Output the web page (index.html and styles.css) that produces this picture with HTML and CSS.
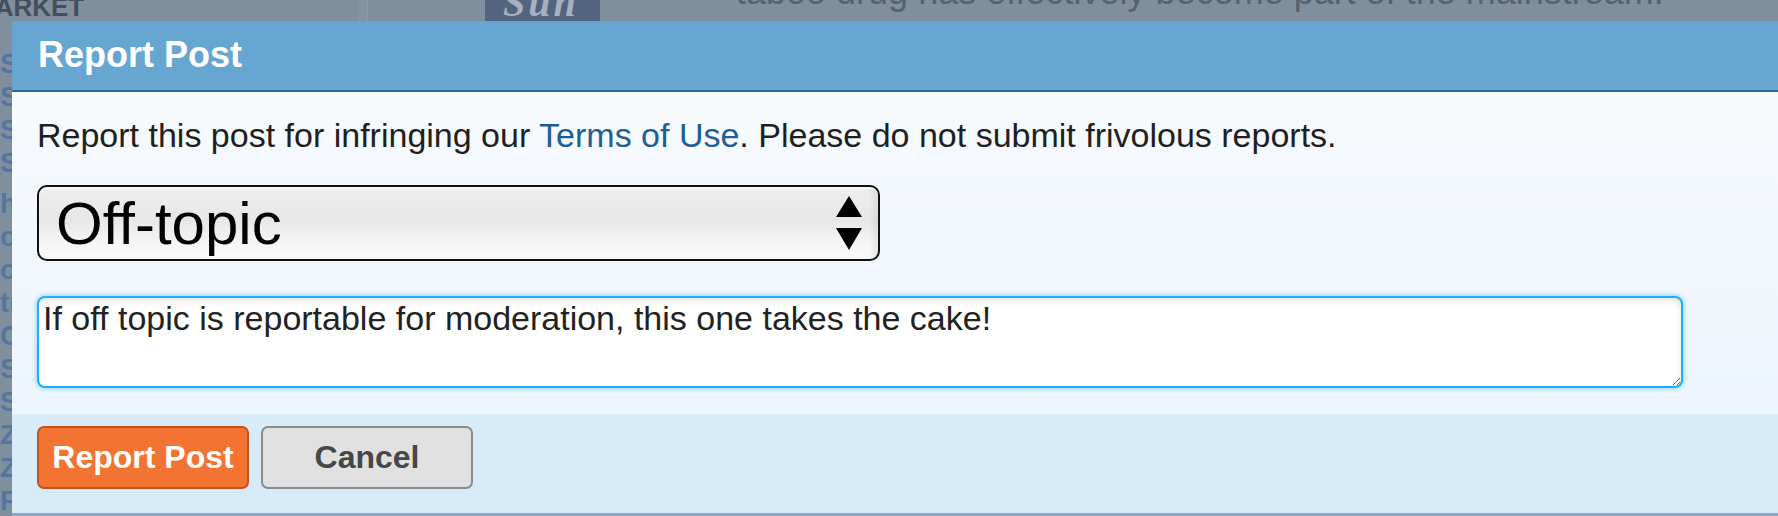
FILE: index.html
```html
<!DOCTYPE html>
<html lang="en">
<head>
  <meta charset="UTF-8">
  <meta name="viewport" content="width=device-width, initial-scale=1.0">
  <title>Report Post</title>
  <link rel="stylesheet" href="styles.css">
</head>
<body>
  <!-- The article page sitting behind the modal -->
  <div class="page-behind">
    <div class="masthead">
      <span class="section-name">MARKET</span>
      <span class="masthead-divider"></span>
      <span class="paper-logo"><span>Sun</span></span>
      <span class="headline">taboo drug has effectively become part of the mainstream.</span>
    </div>
    <ul class="side-links">
      <li>Sports</li>
      <li>Stocks</li>
      <li>Style</li>
      <li>Sun</li>
      <li>home</li>
      <li>opinion</li>
      <li>obits</li>
      <li>travel</li>
      <li>Cars</li>
      <li>Shop</li>
      <li>Savings</li>
      <li>Zip</li>
      <li>Zone</li>
      <li>Find</li>
    </ul>
  </div>

  <div class="report-dialog">
    <h2 class="dialog-title">Report Post</h2>
    <form class="report-form">
      <div class="dialog-body">
        <p class="intro">Report this post for infringing our <a href="#">Terms of Use</a>. Please do not submit frivolous reports.</p>

        <div class="select-box">
          <select id="reason">
            <option>Off-topic</option>
            <option>Spam</option>
            <option>Abusive</option>
            <option>Other</option>
          </select>
          <svg class="select-arrows" width="28" height="54" viewBox="0 0 28 54">
            <polygon points="14,0 27,21 1,21" fill="#000"/>
            <polygon points="1,32 27,32 14,54" fill="#000"/>
          </svg>
        </div>

        <textarea id="details">If off topic is reportable for moderation, this one takes the cake!</textarea>
      </div>

      <div class="dialog-footer">
        <button type="submit" class="btn-report">Report Post</button>
        <button type="button" class="btn-cancel">Cancel</button>
      </div>
    </form>
  </div>
</body>
</html>
```

FILE: styles.css
```css
body {
  margin: 0;
  font-family: "Liberation Sans", Arial, sans-serif;
  overflow: hidden;
  background-color: #7f8f9e;
}

/* Page behind the modal */
.page-behind {
  width: 100vw;
  height: 100vh;
  overflow: hidden;
}

.masthead {
  display: flex;
  align-items: flex-start;
  height: 21px;
  overflow: hidden;
  white-space: nowrap;
}

.section-name {
  flex: none;
  width: 385px;
  margin-left: -27px;
  margin-top: -6px;
  font-size: 26px;
  line-height: 26px;
  font-weight: bold;
  color: #434f5d;
}

.masthead-divider {
  flex: none;
  width: 9px;
  height: 21px;
  background-color: #8393a1;
  border-right: 1px solid #8d9caa;
}

.paper-logo {
  flex: none;
  width: 115px;
  height: 21px;
  margin-left: 117px;
  overflow: hidden;
  background-color: #536481;
}

.paper-logo span {
  display: block;
  margin-top: -17px;
  padding-left: 18px;
  font-family: "Liberation Serif", serif;
  font-weight: bold;
  font-style: italic;
  font-size: 40px;
  line-height: 40px;
  letter-spacing: 3px;
  color: #a6b0bf;
}

.headline {
  flex: none;
  margin-left: 136px;
  margin-top: -28px;
  font-size: 36px;
  line-height: 40px;
  color: #56636f;
}

.side-links {
  list-style: none;
  margin: 0;
  padding: 26px 0 0;
}

.side-links li {
  font-size: 28px;
  line-height: 33px;
  font-weight: bold;
  color: #5575a1;
  white-space: nowrap;
}

.side-links li:nth-child(5) {
  margin-top: 8px;
}

/* The modal */
.report-dialog {
  position: fixed;
  top: 21px;
  left: 12px;
  right: -40px;
  border-bottom: 3px solid #8fa7bc;
}

.dialog-title {
  margin: 0;
  padding: 14px 26px 15px;
  font-size: 36px;
  line-height: 40px;
  font-weight: bold;
  color: #fff;
  background-color: #68a6d2;
  border-bottom: 2px solid #2b699d;
}

.report-form {
  margin: 0;
}

.dialog-body {
  padding: 24px 25px 26px;
  background: linear-gradient(#f7fafd, #edf5fd);
}

.intro {
  margin: 0;
  font-size: 34px;
  line-height: 38px;
  color: #1f1f1f;
}

.intro a {
  color: #1d5f95;
  text-decoration: none;
}

.select-box {
  position: relative;
  width: 843px;
  margin-top: 31px;
}

#reason {
  display: block;
  width: 100%;
  height: 76px;
  box-sizing: border-box;
  padding: 0 70px 0 17px;
  -webkit-appearance: none;
  appearance: none;
  font-family: "Liberation Sans", Arial, sans-serif;
  font-size: 60px;
  color: #000;
  border: 2px solid #111;
  border-radius: 10px;
  background: linear-gradient(#efefef 0%, #e7e7e7 45%, #f4f4f4 75%, #fcfcfc 100%);
  box-shadow: inset 0 2px 2px rgba(255, 255, 255, 0.8), inset -6px 0 8px -4px rgba(0, 0, 0, 0.12);
}

/* Up/down arrows drawn over the select */
.select-arrows {
  position: absolute;
  top: 11px;
  right: 17px;
  pointer-events: none;
}

#details {
  display: block;
  width: 1646px;
  height: 92px;
  box-sizing: border-box;
  margin-top: 35px;
  padding: 1px 4px;
  font-family: "Liberation Sans", Arial, sans-serif;
  font-size: 34px;
  line-height: 39px;
  color: #222;
  border: 2px solid #1eb0f6;
  border-radius: 8px;
  background: #fff;
  box-shadow: 0 0 4px 1px rgba(30, 176, 246, 0.45), inset 0 9px 10px -7px rgba(0, 0, 0, 0.12), inset -5px 0 6px -4px rgba(0, 0, 0, 0.08);
  outline: none;
}

.dialog-footer {
  display: flex;
  gap: 12px;
  padding: 12px 25px 24px;
  background-color: #d7ebf9;
}

.dialog-footer button {
  width: 212px;
  height: 63px;
  padding: 0;
  font-family: "Liberation Sans", Arial, sans-serif;
  font-size: 32px;
  font-weight: bold;
  border-radius: 7px;
  cursor: pointer;
}

.btn-report {
  color: #fff;
  background-color: #f37432;
  border: 2px solid #c5521b;
}

.btn-cancel {
  color: #474747;
  background-color: #e1e1e1;
  border: 2px solid #8b8b8b;
}
```
